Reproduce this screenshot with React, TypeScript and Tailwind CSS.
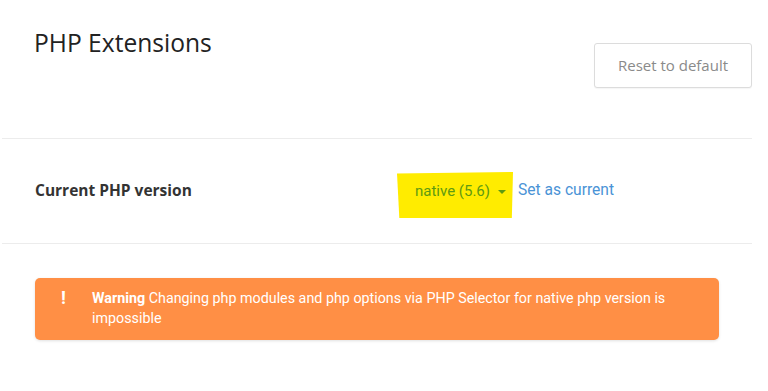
export default function App() {
  return (
    <div className="relative h-[391px] w-[768px] overflow-hidden bg-white">
      <div className="ml-[2px] w-[750px]">
        {/* Header */}
        <div className="flex h-[139px] items-start justify-between border-b border-[#ececec]">
          <h1 className="ml-[32px] mt-[27px] font-['Open_Sans'] text-[24.6px] leading-[32px] font-normal text-[#222]">
            PHP Extensions
          </h1>
          <button className="mt-[43px] flex h-[45px] w-[158px] items-center justify-center rounded-[3px] border border-[#dcdcdc] bg-white font-['Open_Sans'] text-[15px] text-[#8a8a8a] shadow-[0_1px_1px_rgba(0,0,0,0.04)]">
            Reset to default
          </button>
        </div>

        {/* Current version row */}
        <div className="flex h-[105px] items-center border-b border-[#ececec]">
          <div className="ml-[33px] w-[362px] font-['Open_Sans'] text-[15.5px] font-bold text-[#333]">
            Current PHP version
          </div>
          <div className="flex items-center">
            <div className="mt-[8px] flex h-[46px] w-[116px] items-center bg-[#ffec00] pb-[8px] pl-[18px] [clip-path:polygon(0_3%,100%_0,99%_100%,2%_100%)]">
              <span className="font-['Roboto'] text-[15px] text-[#5e9a12]">native (5.6)</span>
              <span className="ml-[8px] mt-[2px] h-0 w-0 border-x-[4px] border-t-[4px] border-x-transparent border-t-[#5e9a12]" />
            </div>
            <a className="ml-[5px] font-['Roboto'] text-[15.6px] text-[#4a93d6]">Set as current</a>
          </div>
        </div>

        {/* Warning */}
        <div className="ml-[33px] mt-[34px] flex h-[62px] w-[684px] rounded-[5px] bg-[#ff8f45] pt-[10px] shadow-[0_1px_3px_rgba(0,0,0,0.12)]">
          <span className="ml-[26px] w-[31px] font-['Roboto'] text-[18px] leading-[20px] font-bold text-white">!</span>
          <p className="font-['Roboto'] text-[14.3px] leading-[20px] text-white">
            <span className="font-bold">Warning</span> Changing php modules and php options via PHP Selector for native php version is
            <br />
            impossible
          </p>
        </div>
      </div>
    </div>
  );
}
